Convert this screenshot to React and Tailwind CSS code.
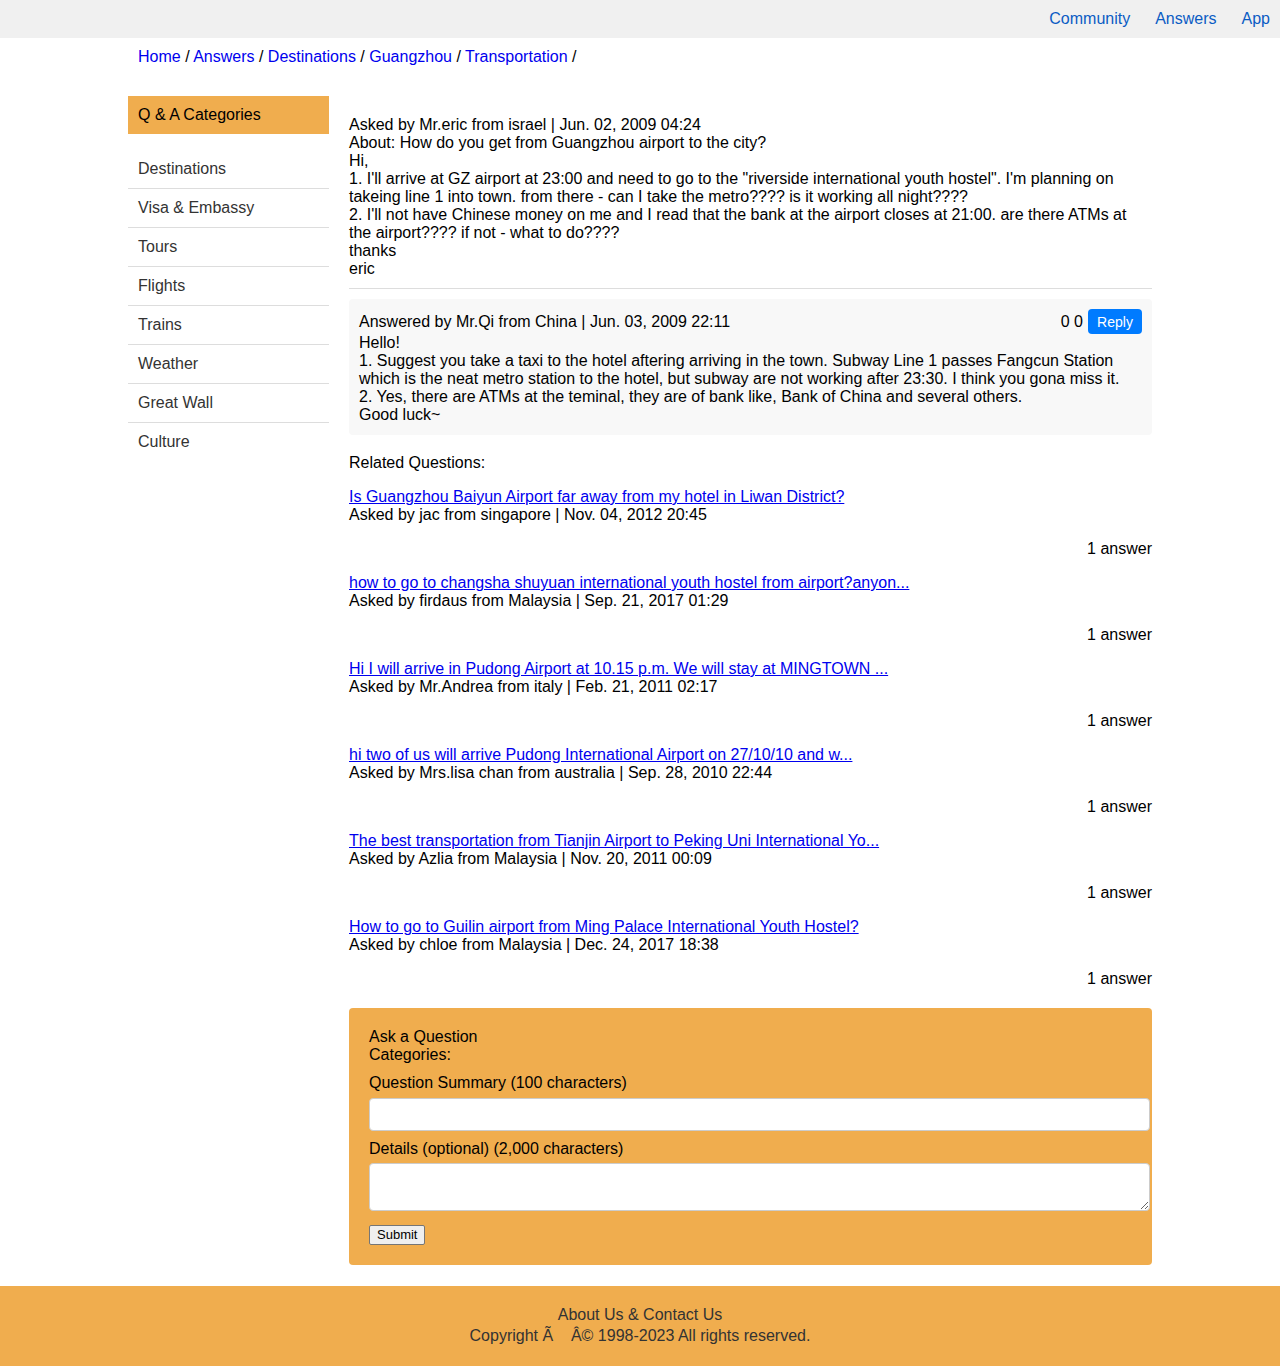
import React from 'react'

const categories = ['Destinations', 'Visa & Embassy', 'Tours', 'Flights', 'Trains', 'Weather', 'Great Wall', 'Culture']

const related = [
  { q: 'Is Guangzhou Baiyun Airport far away from my hotel in Liwan District?', by: 'Asked by jac from singapore | Nov. 04, 2012 20:45' },
  { q: 'how to go to changsha shuyuan international youth hostel from airport?anyon...', by: 'Asked by firdaus from Malaysia | Sep. 21, 2017 01:29' },
  { q: 'Hi I will arrive in Pudong Airport at 10.15 p.m. We will stay at MINGTOWN ...', by: 'Asked by Mr.Andrea from italy | Feb. 21, 2011 02:17' },
  { q: 'hi two of us will arrive Pudong International Airport on 27/10/10 and w...', by: 'Asked by Mrs.lisa chan from australia | Sep. 28, 2010 22:44' },
  { q: 'The best transportation from Tianjin Airport to Peking Uni International Yo...', by: 'Asked by Azlia from Malaysia | Nov. 20, 2011 00:09' },
  { q: 'How to go to Guilin airport from Ming Palace International Youth Hostel?', by: 'Asked by chloe from Malaysia | Dec. 24, 2017 18:38' },
]

const crumbs = ['Home', 'Answers', 'Destinations', 'Guangzhou', 'Transportation']

export default function App() {
  return (
    <div className="min-h-[1366px] bg-white font-['Liberation_Sans',Arial,sans-serif] text-[16px] leading-[18px] text-black">
      {/* top bar */}
      <div className="flex h-[38px] items-center justify-end gap-[25px] bg-[#f0f0f0] pr-[10px]">
        <a className="text-[#0b5cc4]">Community</a>
        <a className="text-[#0b5cc4]">Answers</a>
        <a className="text-[#0b5cc4]">App</a>
      </div>

      <div className="mx-auto w-[1024px]">
        {/* breadcrumb */}
        <div className="pl-[10px] pt-[10px]">
          {crumbs.map((c) => (
            <span key={c}>
              <a className="text-[#0000ee]">{c}</a> /{' '}
            </span>
          ))}
        </div>

        <div className="mt-[30px] flex gap-5">
          {/* sidebar */}
          <div className="w-[201px] shrink-0">
            <div className="flex h-[38px] items-center bg-[#f0ad4e] px-[10px]">Q &amp; A Categories</div>
            <ul className="mt-[16px]">
              {categories.map((c) => (
                <li key={c} className="border-b border-[#dddddd] px-[10px] py-[10px] text-[#333333] last:border-b-0">
                  {c}
                </li>
              ))}
            </ul>
          </div>

          {/* main */}
          <div className="w-[803px] pt-[20px]">
            <div>
              <div>Asked by Mr.eric from israel | Jun. 02, 2009 04:24</div>
              <div>About: How do you get from Guangzhou airport to the city?</div>
              <div>
                Hi,
                <br />
                1. I'll arrive at GZ airport at 23:00 and need to go to the "riverside international youth hostel". I'm planning on takeing line 1 into town. from there - can I take the metro???? is it working all night????
                <br />
                2. I'll not have Chinese money on me and I read that the bank at the airport closes at 21:00. are there ATMs at the airport???? if not - what to do????
                <br />
                thanks
                <br />
                eric
              </div>
            </div>
            <div className="mt-[10px] border-t border-[#dddddd]" />

            {/* answer */}
            <div className="mt-[10px] rounded bg-[#f8f8f8] px-[10px] pb-[11px] pt-[10px]">
              <div className="flex h-[25px] items-center justify-between">
                <span>Answered by Mr.Qi from China | Jun. 03, 2009 22:11</span>
                <div className="flex items-center gap-[5px]">
                  <span>0 0</span>
                  <button className="h-[25px] w-[54px] rounded bg-[#007bff] text-[14px] text-white">Reply</button>
                </div>
              </div>
              <div>
                Hello!
                <br />
                1. Suggest you take a taxi to the hotel aftering arriving in the town. Subway Line 1 passes Fangcun Station which is the neat metro station to the hotel, but subway are not working after 23:30. I think you gona miss it.
                <br />
                2. Yes, there are ATMs at the teminal, they are of bank like, Bank of China and several others.
                <br />
                Good luck~
              </div>
            </div>

            {/* related */}
            <div className="mt-[19px]">Related Questions:</div>
            <div className="mt-4">
              {related.map((r) => (
                <div key={r.q} className="pb-4">
                  <a className="text-[#0000ee] underline">{r.q}</a>
                  <div>{r.by}</div>
                  <div className="mt-4 text-right">1 answer</div>
                </div>
              ))}
            </div>

            {/* ask form */}
            <div className="mt-[4px] rounded bg-[#f0ad4e] px-5 pb-5 pt-[20px]">
              <div>Ask a Question</div>
              <div>Categories:</div>
              <div className="mt-[10px]">Question Summary (100 characters)</div>
              <input className="mt-[6px] block h-[33px] w-[781px] rounded border border-[#cccccc] bg-white" />
              <div className="mt-[9px]">Details (optional) (2,000 characters)</div>
              <textarea className="mt-[5px] block h-[48px] w-[781px] resize rounded border border-[#cccccc] bg-white" />
              <button className="mt-[14px] block h-[20px] rounded-[2px] border border-[#767676] bg-[#efefef] px-[7px] text-[13px] leading-[18px] text-black">
                Submit
              </button>
            </div>
          </div>
        </div>
      </div>

      {/* footer */}
      <div className="mt-[21px] bg-[#f0ad4e] pb-[20px] pt-[18px] text-center leading-[21px] text-[#333333]">
        <div>About Us &amp; Contact Us</div>
        <div>Copyright Ã{'\u00a0\u00a0\u00a0\u00a0'}Â© 1998-2023 All rights reserved.</div>
      </div>
    </div>
  )
}
